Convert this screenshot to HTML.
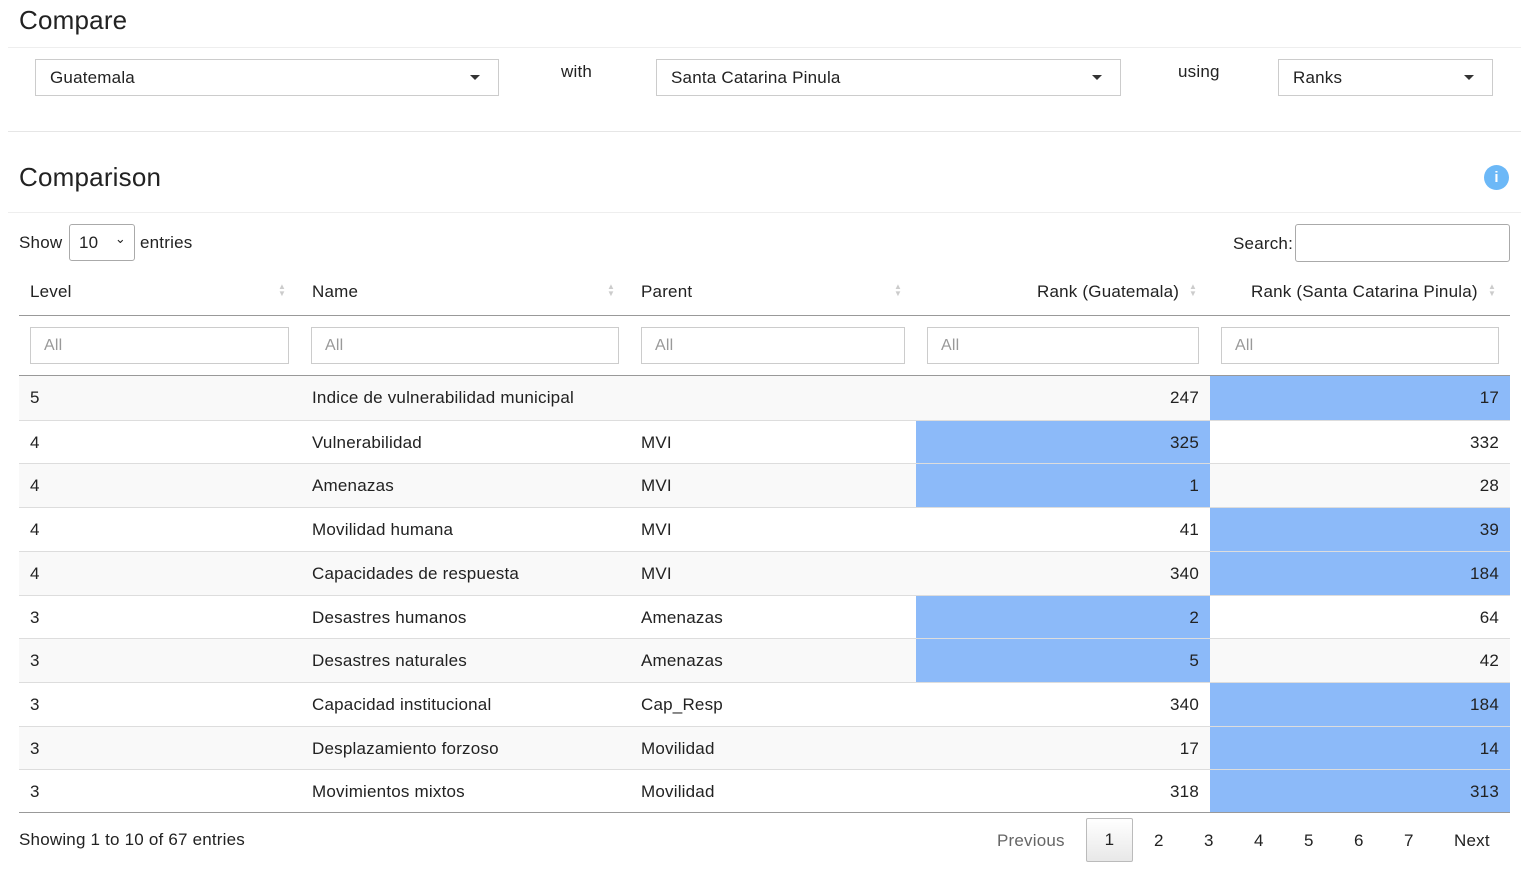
<!DOCTYPE html><html><head><style>
*{box-sizing:border-box}body{margin:0;width:1525px;height:871px;background:#fff;font-family:"Liberation Sans",sans-serif;color:#222;position:relative;overflow:hidden;letter-spacing:0.2px}
.a{position:absolute}
.sel{position:absolute;border:1px solid #ccc;height:37px;font-size:17px;padding:8px 14px;background:#fff}
.sel:after{content:"";position:absolute;right:18px;top:15px;border:5px solid transparent;border-top:5px solid #333;border-bottom:0}
.in{position:absolute;border:1px solid #ccc;height:37px;font-size:16px;color:#999;padding:9px 13px;top:327px}
.row{position:absolute;left:19px;width:1491px;height:44px;border-top:1px solid #ddd;font-size:17px}
.row div{position:absolute;top:0;height:100%;line-height:43px}
.s{background:#f9f9f9}
.b{background:#8cbaf9}
.sort{position:absolute;font-size:8px;color:#ccc;line-height:7px}
</style></head><body>
<div class="a" style="left:19px;top:5px;font-size:26px">Compare</div>
<div class="a" style="left:8px;top:47px;width:1513px;border-top:1px solid #eee"></div>
<div class="sel" style="left:35px;top:59px;width:464px">Guatemala</div>
<div class="a" style="left:561px;top:62px;font-size:17px">with</div>
<div class="sel" style="left:656px;top:59px;width:465px">Santa Catarina Pinula</div>
<div class="a" style="left:1178px;top:62px;font-size:17px">using</div>
<div class="sel" style="left:1278px;top:59px;width:215px">Ranks</div>
<div class="a" style="left:8px;top:131px;width:1513px;border-top:1px solid #e6e6e6"></div>
<div class="a" style="left:19px;top:162px;font-size:26px">Comparison</div>
<div class="a" style="left:1484px;top:165px;width:25px;height:25px;border-radius:50%;background:#6cb8f7;color:#fff;font-weight:bold;font-size:15px;text-align:center;line-height:25px">i</div>
<div class="a" style="left:8px;top:212px;width:1513px;border-top:1px solid #eee"></div>
<div class="a" style="left:19px;top:233px;font-size:17px">Show</div>
<div class="a" style="left:69px;top:224px;width:66px;height:37px;border:1px solid #aaa;border-radius:3px;font-size:17px;padding:8px 9px">10<span style="position:absolute;right:8px;top:6px;font-size:13px">⌄</span></div>
<div class="a" style="left:140px;top:233px;font-size:17px">entries</div>
<div class="a" style="left:1233px;top:234px;font-size:17px">Search:</div>
<div class="a" style="left:1295px;top:224px;width:215px;height:38px;border:1px solid #aaa;border-radius:3px"></div>
<div class="a" style="left:30px;top:282px;font-size:17px">Level</div>
<div class="a" style="left:312px;top:282px;font-size:17px">Name</div>
<div class="a" style="left:641px;top:282px;font-size:17px">Parent</div>
<div class="a" style="left:1037px;top:282px;font-size:17px">Rank (Guatemala)</div>
<div class="a" style="left:1251px;top:282px;font-size:17px">Rank (Santa Catarina Pinula)</div>
<div class="sort" style="left:278px;top:283px">▲<br>▼</div><div class="sort" style="left:607px;top:283px">▲<br>▼</div><div class="sort" style="left:894px;top:283px">▲<br>▼</div><div class="sort" style="left:1189px;top:283px">▲<br>▼</div><div class="sort" style="left:1488px;top:283px">▲<br>▼</div>
<div class="a" style="left:19px;top:315px;width:1491px;border-top:1px solid #999"></div>
<div class="in" style="left:30px;width:259px">All</div>
<div class="in" style="left:311px;width:308px">All</div>
<div class="in" style="left:641px;width:264px">All</div>
<div class="in" style="left:927px;width:272px">All</div>
<div class="in" style="left:1221px;width:278px">All</div>
<div class="a" style="left:19px;top:375px;width:1491px;border-top:1px solid #999"></div>
<div id="rows"></div>
<script>
var d=[["5","Indice de vulnerabilidad municipal","","247","17",2],["4","Vulnerabilidad","MVI","325","332",1],["4","Amenazas","MVI","1","28",1],["4","Movilidad humana","MVI","41","39",2],["4","Capacidades de respuesta","MVI","340","184",2],["3","Desastres humanos","Amenazas","2","64",1],["3","Desastres naturales","Amenazas","5","42",1],["3","Capacidad institucional","Cap_Resp","340","184",2],["3","Desplazamiento forzoso","Movilidad","17","14",2],["3","Movimientos mixtos","Movilidad","318","313",2]];
var h="";d.forEach(function(r,i){var t=376+i*43.7;h+='<div class="row'+(i%2==0?' s':'')+'" style="top:'+t+'px;'+(i==0?'border-top:0':'')+'"><div style="left:11px">'+r[0]+'</div><div style="left:293px">'+r[1]+'</div><div style="left:622px">'+r[2]+'</div><div class="'+(r[5]==1?'b':'')+'" style="left:897px;width:294px;text-align:right;padding-right:11px">'+r[3]+'</div><div class="'+(r[5]==2?'b':'')+'" style="left:1191px;width:300px;text-align:right;padding-right:11px">'+r[4]+'</div></div>';});
document.getElementById("rows").innerHTML=h;
</script>
<div class="a" style="left:19px;top:812px;width:1491px;border-top:1px solid #999"></div>
<div class="a" style="left:19px;top:830px;font-size:17px">Showing 1 to 10 of 67 entries</div>
<div class="a" style="left:997px;top:831px;font-size:17px;color:#666">Previous</div>
<div class="a" style="left:1086px;top:818px;width:47px;height:44px;border:1px solid #bbb;border-radius:2px;background:linear-gradient(#fff,#e8e8e8);text-align:center;line-height:42px;font-size:17px">1</div>
<div class="a" style="left:1154px;top:831px;font-size:17px">2</div>
<div class="a" style="left:1204px;top:831px;font-size:17px">3</div>
<div class="a" style="left:1254px;top:831px;font-size:17px">4</div>
<div class="a" style="left:1304px;top:831px;font-size:17px">5</div>
<div class="a" style="left:1354px;top:831px;font-size:17px">6</div>
<div class="a" style="left:1404px;top:831px;font-size:17px">7</div>
<div class="a" style="left:1454px;top:831px;font-size:17px">Next</div>
</body></html>
